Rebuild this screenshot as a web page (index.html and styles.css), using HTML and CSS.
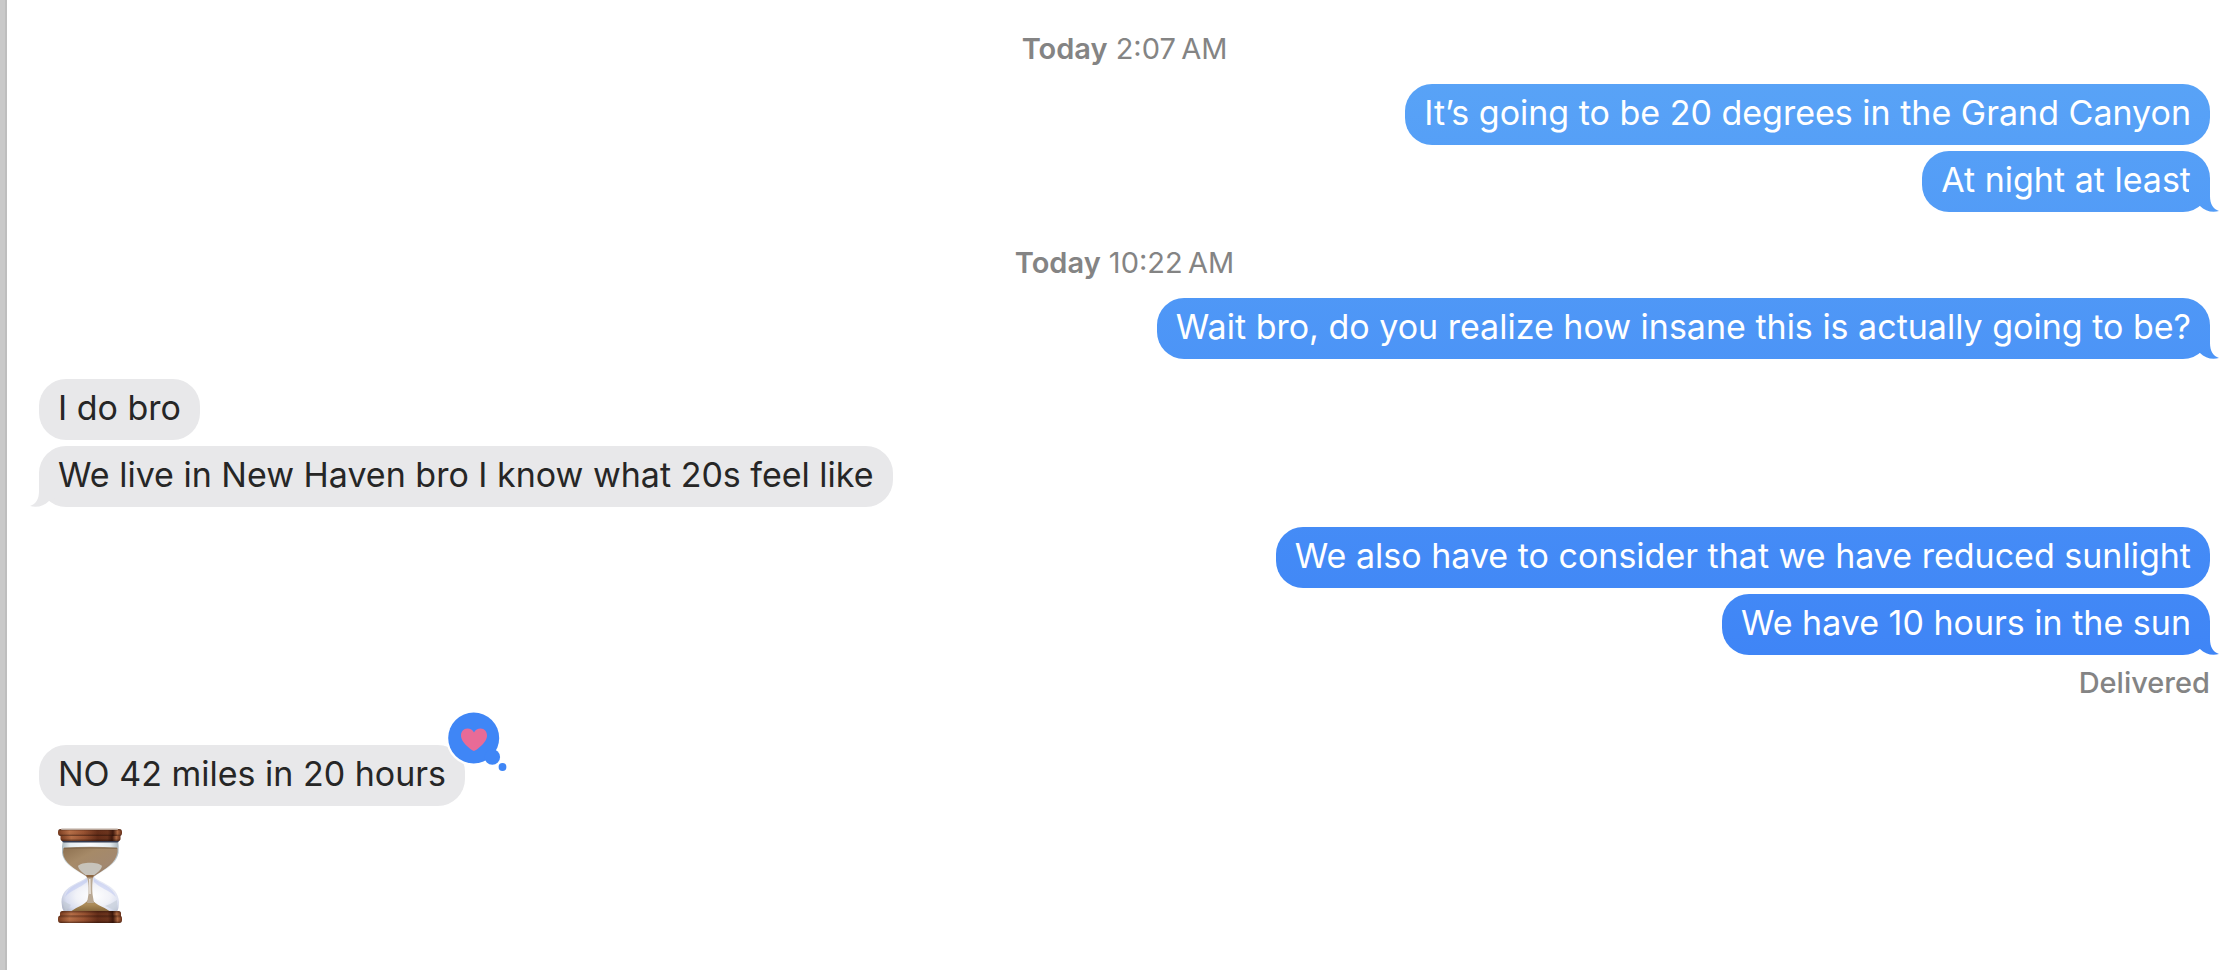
FILE: index.html
```html
<!DOCTYPE html>
<html lang="en">
<head>
    <meta charset="UTF-8">
    <meta name="viewport" content="width=device-width, initial-scale=1.0">
    <title>Messages</title>
    <link rel="stylesheet" href="styles.css">
</head>
<body>

    <main class="chat">
        <p class="timestamp"><strong>Today</strong> 2:07&#8239;AM</p>

        <section class="group sent">
            <p class="bubble">It’s going to be 20 degrees in the Grand Canyon</p>
            <p class="bubble tail">At night at least</p>
        </section>

        <p class="timestamp"><strong>Today</strong> 10:22&#8239;AM</p>

        <section class="group sent">
            <p class="bubble tail">Wait bro, do you realize how insane this is actually going to be?</p>
        </section>

        <section class="group received">
            <p class="bubble">I do bro</p>
            <p class="bubble tail">We live in New Haven bro I know what 20s feel like</p>
        </section>

        <section class="group sent">
            <p class="bubble">We also have to consider that we have reduced sunlight</p>
            <p class="bubble tail">We have 10 hours in the sun</p>
            <p class="status">Delivered</p>
        </section>

        <section class="group received">
            <p class="bubble reacted">
                NO 42 miles in 20 hours
                <svg class="tapback" viewBox="0 0 64 64" role="img" aria-label="Loved">
                    <circle cx="29" cy="28" r="28" fill="#fff"/>
                    <g fill="#3f86f6">
                        <circle cx="28.7" cy="28" r="25.5"/>
                        <circle cx="47.3" cy="47" r="7.8"/>
                        <circle cx="57.5" cy="57" r="3.9"/>
                    </g>
                    <path fill="#e96b97" d="M29 41C27 40.4 16 33 16 25.5C16 21.5 18.7 18.6 22.3 18.6C25.4 18.6 27.8 20 29 22.6C30.2 20 32.6 18.6 35.7 18.6C39.3 18.6 42 21.5 42 25.5C42 33 31 40.4 29 41Z"/>
                </svg>
            </p>
            <svg class="hourglass" viewBox="0 0 64 96" role="img" aria-label="Hourglass">
                <defs>
                    <linearGradient id="wood" x1="0" x2="1" y1="0" y2="0">
                        <stop offset="0" stop-color="#7a3d20"/>
                        <stop offset=".18" stop-color="#b87048"/>
                        <stop offset=".4" stop-color="#9a5332"/>
                        <stop offset=".62" stop-color="#662e19"/>
                        <stop offset=".78" stop-color="#6c341d"/>
                        <stop offset=".86" stop-color="#40190d"/>
                        <stop offset=".93" stop-color="#b06a43"/>
                        <stop offset="1" stop-color="#6a311a"/>
                    </linearGradient>
                    <linearGradient id="shade" x1="0" x2="0" y1="0" y2="1">
                        <stop offset="0" stop-color="#1c0a04" stop-opacity=".45"/>
                        <stop offset=".35" stop-color="#1c0a04" stop-opacity="0"/>
                        <stop offset=".7" stop-color="#1c0a04" stop-opacity=".05"/>
                        <stop offset="1" stop-color="#1c0a04" stop-opacity=".55"/>
                    </linearGradient>
                    <linearGradient id="glassTop" x1="0" x2="1" y1="0" y2="0">
                        <stop offset="0" stop-color="#a9b7bd"/>
                        <stop offset=".15" stop-color="#e8eff2"/>
                        <stop offset=".5" stop-color="#fbfcfe"/>
                        <stop offset=".85" stop-color="#e3ebef"/>
                        <stop offset="1" stop-color="#a6b3bb"/>
                    </linearGradient>
                    <radialGradient id="glassBottom" cx=".55" cy=".55" r=".6">
                        <stop offset="0" stop-color="#fff"/>
                        <stop offset=".5" stop-color="#f1f2f8"/>
                        <stop offset=".8" stop-color="#d9def0"/>
                        <stop offset="1" stop-color="#b6bccd"/>
                    </radialGradient>
                    <linearGradient id="sandTop" x1="0" x2="1" y1="0" y2="1">
                        <stop offset="0" stop-color="#8d704f"/>
                        <stop offset=".35" stop-color="#a68a68"/>
                        <stop offset=".7" stop-color="#a28870"/>
                        <stop offset="1" stop-color="#7d6552"/>
                    </linearGradient>
                    <linearGradient id="sandPile" x1="0" x2="0" y1="0" y2="1">
                        <stop offset="0" stop-color="#a88a68"/>
                        <stop offset=".5" stop-color="#ab8b59"/>
                        <stop offset="1" stop-color="#836439"/>
                    </linearGradient>
                </defs>
                <!-- lower bulb -->
                <path fill="url(#glassBottom)" d="M30 48C25 55 4 56 3.500 74Q3.500 80 6 84H59Q61 80 61 74C60 56 40 55 35 48Z"/>
                <path fill="#aebcf0" opacity=".4" d="M29 51C20 56 10 58 7 69C13 62 22 60 29 54ZM36 51C44 56 54 58 58 69C51 62 42 60 36 54Z"/>
                <path fill="#c3ccd6" opacity=".6" d="M5 73L13 77L8 83Q5 80 5 73ZM59 72Q53 76 47 78L58 83Q60 78 59 72Z"/>
                <path fill="url(#sandPile)" d="M31 69H33.500C34 76 45 78 53 84H12C20 78 30 76 31 69Z"/>
                <!-- upper bulb -->
                <path fill="url(#glassTop)" d="M5 12H60Q61 18 60.500 25C58 38 44 43 36 49H28C20 43 6 38 4 25Q3.500 18 5 12Z"/>
                <path fill="url(#sandTop)" d="M5.500 20Q32 18.500 59.500 20Q60 24 58.500 28C55 38 43 43 36 48.500H28.500C21 43 9 38 5.500 28Q4.500 24 5.500 20Z"/>
                <path fill="#7e6245" opacity=".7" d="M6 19.500Q32 18 59 19.500V21Q32 20 6 21Z"/>
                <path fill="#cbcac3" opacity=".9" d="M20 38C23 33.500 41 33.500 44 38C43 43 38 45 36 47.500H28C26 45 21 43 20 38Z"/>
                <!-- neck and falling sand -->
                <path fill="#b9a893" d="M28.500 47.500H35.500C34.500 52 34 57 34.500 66L36 75H29L30.500 66C31 57 30 52 28.500 47.500Z"/>
                <path fill="#ede6df" d="M31 51H32.500L32.800 66H31.300Z"/>
                <path fill="#8c6540" d="M28 47H36L35 49.500H29Z"/>
                <!-- wooden caps -->
                <rect x="4" y="10" width="57" height="4.500" rx="2" fill="#343a50"/>
                <rect x="2.500" y="5" width="60" height="8" rx="2.500" fill="url(#wood)"/>
                <rect x="2.500" y="5" width="60" height="8" rx="2.500" fill="url(#shade)"/>
                <rect y="1" width="64" height="7" rx="3" fill="url(#wood)"/>
                <rect y="1" width="64" height="7" rx="3" fill="url(#shade)"/>
                <rect x="3" y=".5" width="57" height="1.500" rx=".7" fill="#b9a79b"/>
                <rect x="2" y="83" width="61" height="8" rx="2.500" fill="url(#wood)"/>
                <rect x="2" y="83" width="61" height="8" rx="2.500" fill="url(#shade)"/>
                <rect y="87.500" width="64" height="7.500" rx="3" fill="url(#wood)"/>
                <rect y="87.500" width="64" height="7.500" rx="3" fill="url(#shade)"/>
            </svg>
        </section>
    </main>

</body>
</html>
```

FILE: styles.css
```css
* {
    box-sizing: border-box;
}
body {
    margin: 0;
    min-height: 100vh;
    background: #ffffff;
    color: #262626;
    font-family: Inter, "Liberation Sans", sans-serif;
    /* edge of the sidebar */
    border-left: 5px solid #c9c9c9;
    box-shadow: inset 2px 0 0 #bebebe;
}
p {
    margin: 0;
}
.chat {
    display: flex;
    flex-direction: column;
    gap: 20px;
    padding: 18px 24px 44px 34px;
}
.timestamp {
    margin-top: 16px;
    color: #848484;
    font-size: 29px;
    line-height: 30px;
    text-align: center;
}
.timestamp strong {
    font-weight: 600;
}
.group {
    display: flex;
    flex-direction: column;
    gap: 6px;
}
.sent {
    align-items: flex-end;
}
.received {
    align-items: flex-start;
}
.bubble {
    position: relative;
    padding: 7px 19px 10px;
    border-radius: 27px;
    font-size: 34px;
    line-height: 44px;
}
.received .bubble {
    background: #e8e8ea;
}
/* one gradient runs behind all sent bubbles */
.sent .bubble,
.sent .tail::after {
    background: linear-gradient(#5ca7f7, #3f85f6 655px) fixed;
    color: #ffffff;
}
.tail::after {
    content: "";
    position: absolute;
    right: -9px;
    bottom: 0;
    width: 40px;
    height: 30px;
    clip-path: path("M10 0H31V14C31 22 34 27 40 29C33 31 26 29 21 24L10 20Z");
}
.received .tail::after {
    right: auto;
    left: -9px;
    background: #e8e8ea;
    transform: scaleX(-1);
}
.status {
    margin-top: 6px;
    color: #848484;
    font-size: 29px;
    font-weight: 500;
    line-height: 32px;
}
.reacted {
    margin-top: 26px;
}
.tapback {
    position: absolute;
    top: -35px;
    right: -44px;
    width: 64px;
    height: 64px;
}
.hourglass {
    width: 64px;
    height: 96px;
    margin: 16px 19px 0;
}
```
